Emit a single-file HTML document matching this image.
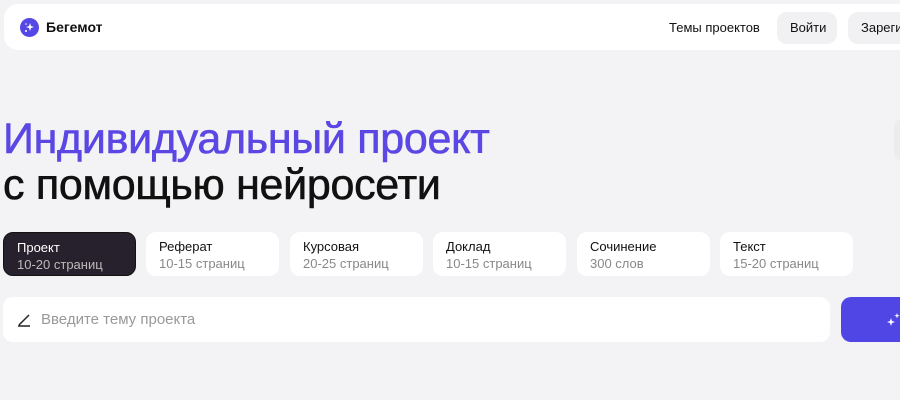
<!DOCTYPE html><html><head><meta charset="utf-8"><style>
*{margin:0;padding:0;box-sizing:border-box}
html,body{width:900px;height:400px;overflow:hidden}
body{background:#f3f3f5;font-family:"Liberation Sans",sans-serif;position:relative;color:#111}
.wrap{position:absolute;left:0;top:0;width:900px;height:400px;overflow:hidden}
.hdr{position:absolute;left:4px;top:4px;width:896px;height:46px;background:#fff;border-radius:14px 0 0 14px}
.logo{position:absolute;left:20px;top:18px;width:19px;height:19px;border-radius:50%;background:#5546e6}
.brand{position:absolute;left:46px;top:19px;font-weight:bold;font-size:14px}
.nav{position:absolute;left:669px;top:20px;font-size:13px}
.btn{position:absolute;top:12px;height:32px;background:#f1f1f4;border-radius:10px;font-size:13px;padding:8px 13px;white-space:nowrap;overflow:hidden}
h1{position:absolute;left:3px;font-weight:normal;font-size:43px;letter-spacing:-0.3px;white-space:nowrap;-webkit-text-stroke:0.6px currentColor}
.tab{position:absolute;top:232px;width:133px;height:44px;background:#fff;border-radius:10px;padding:6px 13px;font-size:13px;line-height:17px}
.tab span{color:#888}
.tab.a{background:#27212e;color:#fff;border:1px solid #111}
.tab.a span{color:#bbb}
.inp{position:absolute;left:3px;top:297px;width:827px;height:45px;background:#fff;border-radius:10px;font-size:15px;color:#999;padding:14px 0 0 38px}
.go{position:absolute;left:841px;top:297px;width:59px;height:45px;background:#5046e5;border-radius:10px 0 0 10px}
</style></head><body><div class="wrap">
<div class="hdr"></div>
<div class="logo"><svg width="19" height="19" viewBox="0 0 19 19"><path d="M10 5l1 3 3 1-3 1-1 3-1-3-3-1 3-1z" fill="#fff"/><circle cx="6" cy="13" r="1" fill="#fff"/><circle cx="6" cy="6" r=".8" fill="#fff"/></svg></div>
<div class="brand">Бегемот</div>
<div class="nav">Темы проектов</div>
<div class="btn" style="left:777px;width:60px">Войти</div>
<div class="btn" style="left:848px;width:52px;border-radius:10px 0 0 10px">Зарегистрироваться</div>
<div style="position:absolute;left:894px;top:120px;width:6px;height:40px;background:#ececef;border-radius:10px 0 0 10px"></div>
<h1 style="top:115px;color:#5b47e3">Индивидуальный проект</h1>
<h1 style="top:161px">с помощью нейросети</h1>
<div class="tab a" style="left:3px">Проект<br><span>10-20 страниц</span></div>
<div class="tab" style="left:146px">Реферат<br><span>10-15 страниц</span></div>
<div class="tab" style="left:290px">Курсовая<br><span>20-25 страниц</span></div>
<div class="tab" style="left:433px">Доклад<br><span>10-15 страниц</span></div>
<div class="tab" style="left:577px">Сочинение<br><span>300 слов</span></div>
<div class="tab" style="left:720px">Текст<br><span>15-20 страниц</span></div>
<div class="inp">Введите тему проекта</div>
<svg style="position:absolute;left:17px;top:313px" width="14" height="14" viewBox="0 0 14 14"><path d="M1 13h12M2 12l8-8M10 4l2-2" stroke="#222" stroke-width="1.5" fill="none"/></svg>
<div class="go"><svg style="position:absolute;left:44px;top:15px" width="16" height="16" viewBox="0 0 16 16"><path d="M6 6l1 3 3 1-3 1-1 3-1-3-3-1 3-1z M12 1l.7 2 2 .7-2 .7-.7 2-.7-2-2-.7 2-.7z" fill="#fff"/></svg></div>
</div></body></html>
